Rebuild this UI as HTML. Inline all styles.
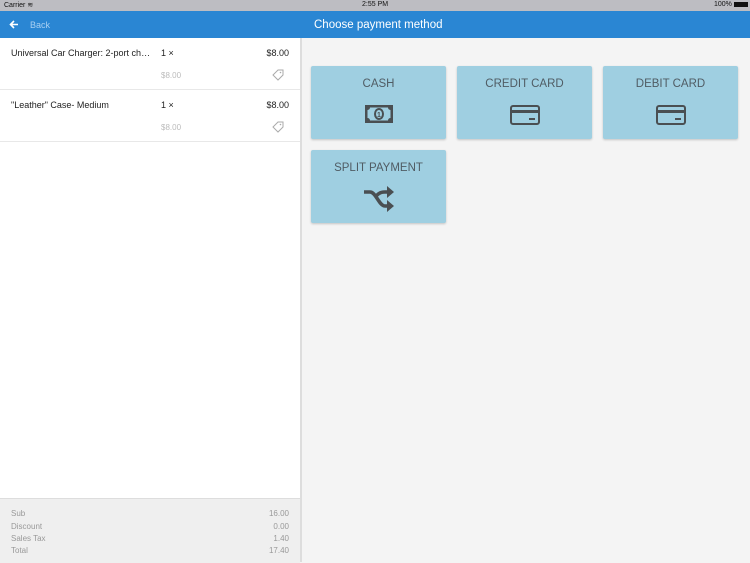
<html><head><style>
body{margin:0;width:750px;height:562px;position:relative;overflow:hidden;font-family:"Liberation Sans",sans-serif;background:#f4f4f4}
.sb{position:absolute;top:0;left:0;width:750px;height:11px;background:#bdbdc2;font-size:7px;color:#111}
.nav{position:absolute;top:11px;left:0;width:750px;height:27px;background:#2a86d3;color:#fff}
.left{position:absolute;top:38px;left:0;width:300px;height:524px;background:#fff;border-right:2px solid #ddd}
.item{position:relative;height:51px;border-bottom:1px solid #e8e8e8;font-size:9px;color:#222}
.t{position:absolute}
.tile{position:absolute;width:135px;height:73px;background:#9fcfe1;border-radius:2px;box-shadow:0 1px 2px rgba(0,0,0,.2);text-align:center;color:#505c64;font-size:11.5px}
.tile .l{margin-top:12px}
.tile svg{position:absolute;left:50%;transform:translateX(-50%)}
.foot{position:absolute;left:0;top:460px;width:300px;height:64px;background:#efefef;border-top:1px solid #ddd;font-size:8px;color:#999}
</style></head><body>
<div class="sb"><span style="position:absolute;left:4px;top:1px">Carrier ︎≋</span><span style="position:absolute;left:362px;top:1px">2:55 PM</span><span style="position:absolute;left:714px;top:1px">100% <span style="display:inline-block;width:14px;height:5px;background:#111;vertical-align:middle"></span></span></div>
<div class="nav"><svg style="position:absolute;left:9px;top:9px" width="10" height="9" viewBox="0 0 10 9"><path d="M9 4.5H2M5 1L1.5 4.5 5 8" stroke="#fff" stroke-width="1.6" fill="none"/></svg><span style="position:absolute;left:30px;top:9px;font-size:9px;color:#a9d0f2">Back</span><span style="position:absolute;left:314px;top:8px;font-size:11.5px">Choose payment method</span></div>
<div class="left">
<div class="item"><span class="t" style="left:11px;top:10px;width:140px;white-space:nowrap;overflow:hidden;text-overflow:ellipsis">Universal Car Charger: 2-port charger</span><span class="t" style="left:161px;top:10px">1 ×</span><span class="t" style="right:11px;top:10px">$8.00</span><span class="t" style="left:161px;top:33px;font-size:8px;color:#bbb">$8.00</span><svg class="t" style="left:272px;top:31px" width="12" height="12" viewBox="0 0 12 12"><path d="M6 1h5v5l-5 5-5-5z" fill="none" stroke="#aaa"/><circle cx="8.5" cy="3.5" r="0.8" fill="#aaa"/></svg></div>
<div class="item"><span class="t" style="left:11px;top:10px">"Leather" Case- Medium</span><span class="t" style="left:161px;top:10px">1 ×</span><span class="t" style="right:11px;top:10px">$8.00</span><span class="t" style="left:161px;top:33px;font-size:8px;color:#bbb">$8.00</span><svg class="t" style="left:272px;top:31px" width="12" height="12" viewBox="0 0 12 12"><path d="M6 1h5v5l-5 5-5-5z" fill="none" stroke="#aaa"/><circle cx="8.5" cy="3.5" r="0.8" fill="#aaa"/></svg></div>
<div class="foot">
<span class="t" style="left:11px;top:10px">Sub</span><span class="t" style="right:11px;top:10px">16.00</span>
<span class="t" style="left:11px;top:23px">Discount</span><span class="t" style="right:11px;top:23px">0.00</span>
<span class="t" style="left:11px;top:35px">Sales Tax</span><span class="t" style="right:11px;top:35px">1.40</span>
<span class="t" style="left:11px;top:47px">Total</span><span class="t" style="right:11px;top:47px">17.40</span>
</div></div>
<div class="tile" style="left:311px;top:66px"><div class="l">CASH</div><svg style="top:38px" width="30" height="20" viewBox="0 0 30 20"><rect x="1" y="1" width="28" height="18" fill="#4a4f52"/><rect x="3.5" y="3.5" width="23" height="13" fill="#9fcfe1"/><circle cx="3.5" cy="3.5" r="2.5" fill="#4a4f52"/><circle cx="26.5" cy="3.5" r="2.5" fill="#4a4f52"/><circle cx="3.5" cy="16.5" r="2.5" fill="#4a4f52"/><circle cx="26.5" cy="16.5" r="2.5" fill="#4a4f52"/><ellipse cx="15" cy="10" rx="5" ry="6" fill="#4a4f52"/><ellipse cx="15" cy="10" rx="3" ry="4" fill="#9fcfe1"/><text x="15" y="12.8" font-size="7" font-weight="bold" fill="#4a4f52" text-anchor="middle" font-family="Liberation Sans">1</text></svg></div>
<div class="tile" style="left:457px;top:66px"><div class="l">CREDIT CARD</div><svg style="top:39px" width="30" height="20" viewBox="0 0 30 20"><rect x="1" y="1" width="28" height="18" rx="2" fill="none" stroke="#4a4f52" stroke-width="2"/><rect x="1" y="5" width="28" height="3" fill="#4a4f52"/><rect x="19" y="13" width="6" height="2" fill="#4a4f52"/></svg></div>
<div class="tile" style="left:603px;top:66px"><div class="l">DEBIT CARD</div><svg style="top:39px" width="30" height="20" viewBox="0 0 30 20"><rect x="1" y="1" width="28" height="18" rx="2" fill="none" stroke="#4a4f52" stroke-width="2"/><rect x="1" y="5" width="28" height="3" fill="#4a4f52"/><rect x="19" y="13" width="6" height="2" fill="#4a4f52"/></svg></div>
<div class="tile" style="left:311px;top:150px"><div class="l">SPLIT PAYMENT</div><svg style="top:36px" width="34" height="26" viewBox="0 0 34 26"><path d="M2 6h6c6 0 9 14 15 14h3M14 10c3-3 5-4 9-4h3" stroke="#4a4f52" stroke-width="3.5" fill="none"/><path d="M25 0l7 6-7 6zM25 14l7 6-7 6z" fill="#4a4f52"/></svg></div>
</body></html>
